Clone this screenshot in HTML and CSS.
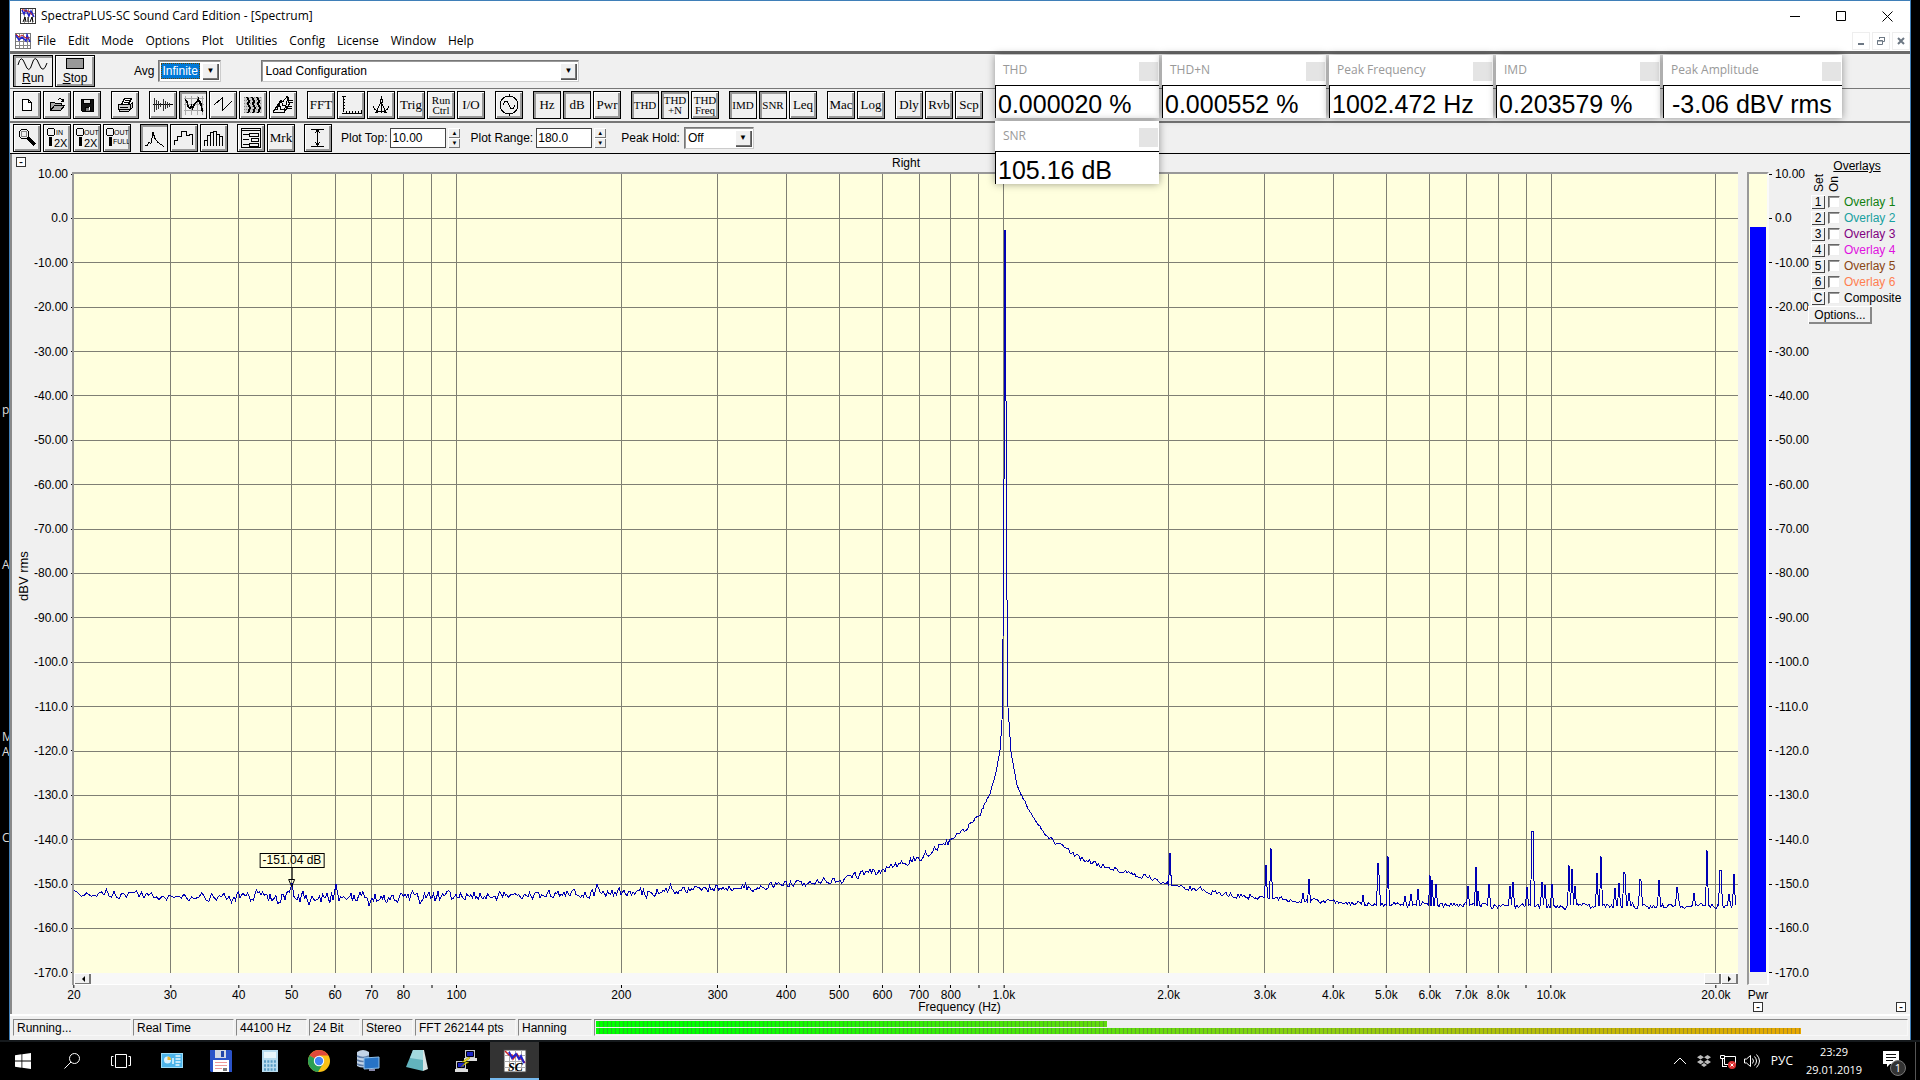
FILE: index.html
```html
<!DOCTYPE html>
<html lang="en">
<head>
<meta charset="utf-8">
<title>SpectraPLUS-SC Sound Card Edition - [Spectrum]</title>
<link rel="stylesheet" href="styles.css">
</head>
<body>
<div class="desktop">
  <span class="desk-label" style="top:402px">p</span>
  <span class="desk-label" style="top:557px">A</span>
  <span class="desk-label" style="top:729px">M</span>
  <span class="desk-label" style="top:744px">A</span>
  <span class="desk-label" style="top:830px">C</span>

  <main class="window">
    <header class="titlebar">
      <svg class="app-icon" viewBox="0 0 16 16"><rect x=".5" y=".5" width="15" height="15" fill="#fff" stroke="#333"/><path d="M4.500 1v14M8.500 1v14M12.500 1v14M1 5.500h14" stroke="#999"/><path d="M2 2l2 4 2-4 3 6 2-5 3 6" fill="none" stroke="#22c" stroke-width="1.500"/><path d="M2 1l3 2 4 0 3 4" fill="none" stroke="#c22"/><path d="M3 14l2-5 1 5M8 9v5M10 14l2-5 1 5" fill="none" stroke="#000"/></svg>
      <h1>SpectraPLUS-SC Sound Card Edition - [Spectrum]</h1>
      <div class="win-buttons">
        <button aria-label="Minimize"><svg viewBox="0 0 11 11"><path d="M0 5.500h10"/></svg></button>
        <button aria-label="Maximize"><svg viewBox="0 0 11 11"><path d="M.5.5h9v9h-9z"/></svg></button>
        <button aria-label="Close"><svg viewBox="0 0 11 11"><path d="M.5.5l10 10M10.500.5l-10 10"/></svg></button>
      </div>
    </header>
    <nav class="menubar">
      <svg class="app-icon" viewBox="0 0 16 16"><rect x=".5" y=".5" width="15" height="15" fill="#fff" stroke="#777"/><path d="M4.500 1v14M8.500 1v14M12.500 1v14M1 4.500h14M1 8.500h14M1 12.500h14" stroke="#888"/><path d="M1 2l3 5 3-3 4 4 1-6 3 7" fill="none" stroke="#22c" stroke-width="1.500"/><path d="M1 1l3 3 3-2 4 3 3 0" fill="none" stroke="#c22"/></svg>
      <button>File</button><button>Edit</button><button>Mode</button><button>Options</button><button>Plot</button><button>Utilities</button><button>Config</button><button>License</button><button>Window</button><button>Help</button>
      <div class="mdi-buttons">
        <button aria-label="Minimize document"><svg viewBox="0 0 10 10"><path d="M2 8h6" stroke-width="2"/></svg></button>
        <button aria-label="Restore document"><svg viewBox="0 0 10 10"><path d="M3.500 3V1.500h5v4H7M3 1.500h6M1.500 4.500h5v4h-5zM1 5h6"/></svg></button>
        <button aria-label="Close document"><svg viewBox="0 0 10 10"><path d="M2 2l6 6M8 2l-6 6" stroke-width="2"/></svg></button>
      </div>
    </nav>

    <div class="bar bar-run">
      <button class="big on"><svg viewBox="0 0 32 14"><path d="M1 8Q4-4 8 7T15 7T22 7T30 6" /></svg><span><u>R</u>un</span></button>
      <button class="big"><svg viewBox="0 0 32 14"><rect x="7.500" y="1.500" width="17" height="10" fill="#999"/></svg><span><u>S</u>top</span></button>
      <label class="avg-label" for="avg">Avg</label>
      <span class="combo combo-avg"><select id="avg"><option>Infinite</option></select></span>
      <span class="combo combo-config"><select aria-label="Configuration"><option>Load Configuration</option></select></span>
    </div>

    <div class="bar bar-tools">
      <div class="group">
        <button class="tool" aria-label="New"><svg viewBox="0 0 24 24"><path d="M7.500 6.500h6l3 3v8h-9zM13.500 6.500v3h3" fill="#fff"/></svg></button>
        <button class="tool" aria-label="Open"><svg viewBox="0 0 24 24"><path d="M5.500 17.500v-8h4l1 1h6v2M5.500 17.500l4-5h10l-4 5z" fill="#aaa"/><path d="M13 6.500q3-2 5 1m.5-2v3h-3"/></svg></button>
        <button class="tool" aria-label="Save"><svg viewBox="0 0 24 24"><path d="M6 6h12v12H7l-1-1z" fill="#111"/><path d="M8.500 6.500h7v4h-7z" fill="#ddd"/><path d="M10 14h5v4h-5z" fill="#777"/><path d="M14.500 14v3" stroke="#fff"/></svg></button>
      </div>
      <div class="group">
        <button class="tool" aria-label="Print"><svg viewBox="0 0 24 24"><path d="M8.500 11.500l3-6h7l-3 6" fill="#fff"/><path d="M12 7.500h5M11 9.500h5"/><path d="M5.500 11.500h12v5h-12zM17.500 11.500l2-2v5l-2 2M6.500 16.500v2h9l3-3" fill="#ccc"/><path d="M7 14.500h8"/></svg></button>
      </div>
      <div class="group">
        <button class="tool" aria-label="Time series"><svg viewBox="0 0 24 24"><path d="M2 11.500h20"/><path d="M3.500 5v14M5.500 7v10M7.500 8v8M9.500 10v4M12.500 6v12M14.500 8v8M16.500 9v6M18.500 10v4" stroke="#333"/></svg></button>
        <button class="tool on" aria-label="Spectrum"><svg viewBox="0 0 24 24"><path d="M4.500 3v19M10.500 3v19M16.500 3v19M21.500 3v19M3 5.500h20M3 11.500h20M3 17.500h20" stroke="#aaa"/><path d="M4 7q2 0 2.500 4t3 4l1-2 1 2 2-4q3-2 4-5l1 4 1-1 2 10" stroke-width="1.500"/></svg></button>
        <button class="tool" aria-label="Phase"><svg viewBox="0 0 24 24"><path d="M3 12l8-7v13l10-10"/></svg></button>
        <button class="tool" aria-label="Spectrogram"><svg viewBox="0 0 24 24"><rect x="3" y="4" width="18" height="16" fill="#ccc" stroke="none"/><path d="M3 4.500h18M3 7.500h18M3 10.500h18M3 13.500h18M3 16.500h18M3 19.500h18" stroke="#888" stroke-dasharray="1 1"/><path d="M6 4l2 4-1 3 2 4-2 5M11 4l2 4-1 3 2 4-2 5M16 4l2 4-1 3 2 4-2 5" stroke-width="2"/></svg></button>
        <button class="tool" aria-label="3-D surface"><svg viewBox="0 0 24 24"><path d="M2 19.500h11l3-4h5M3 16.500h3l2-6 2 6h3l2-3h6M5 13.500h2l3-6 2 5h3l2-8 1 5h4M8 8.500h4l4-5 2 4h4M2 19l6-9M13 19l6-9"/></svg></button>
      </div>
      <div class="group">
        <button class="tool">FFT</button>
        <button class="tool" aria-label="Scaling"><svg viewBox="0 0 24 24"><path d="M4.500 3v16M3 3.500h4M4 6.500h2M4 9.500h2M4 12.500h2M4 15.500h2M3 20.500h19v-4M7.500 18v3M10.500 18v3M13.500 18v3M16.500 18v3M19.500 18v3"/></svg></button>
        <button class="tool" aria-label="Calibration"><svg viewBox="0 0 24 24"><path d="M12 3v4M11 6h2v3h-2zM12 9L7 19.500l3-1M12 9l5 10.500-3-1M12 9v11M4 13q1 4 5 5h6q4-1 5-5"/></svg></button>
        <button class="tool">Trig</button>
        <button class="tool two">Run<br>Ctrl</button>
        <button class="tool">I/O</button>
      </div>
      <div class="group">
        <button class="tool" aria-label="Signal generator"><svg viewBox="0 0 24 24"><circle cx="12" cy="12" r="9"/><path d="M12 1v2M12 21v2M6 12q3-8 6 0t6 0"/></svg></button>
      </div>
      <div class="group">
        <button class="tool on">Hz</button><button class="tool on">dB</button><button class="tool">Pwr</button>
      </div>
      <div class="group">
        <button class="tool caps on">THD</button><button class="tool two on">THD<br>+N</button><button class="tool two">THD<br>Freq</button>
      </div>
      <div class="group">
        <button class="tool caps on">IMD</button><button class="tool caps on">SNR</button><button class="tool">Leq</button>
      </div>
      <div class="group">
        <button class="tool">Mac</button><button class="tool">Log</button>
      </div>
      <div class="group">
        <button class="tool">Dly</button><button class="tool">Rvb</button><button class="tool">Scp</button>
      </div>
    </div>

    <div class="bar bar-plot">
      <div class="group">
        <button class="tool" aria-label="Zoom"><svg viewBox="0 0 24 24"><circle cx="9" cy="8" r="5"/><circle cx="9" cy="8" r="3" stroke="#888"/><path d="M13 12l7 7" stroke-width="3"/></svg></button>
        <button class="tool" aria-label="Zoom in 2X"><svg viewBox="0 0 24 24"><circle cx="6" cy="6" r="4"/><path d="M5.500 11v9" stroke-width="3"/><text x="11" y="9">IN</text><text x="9" y="21" class="t2">2X</text></svg></button>
        <button class="tool" aria-label="Zoom out 2X"><svg viewBox="0 0 24 24"><circle cx="5" cy="6" r="4"/><path d="M5.500 11v9" stroke-width="3"/><text x="9" y="9">OUT</text><text x="9" y="21" class="t2">2X</text></svg></button>
        <button class="tool" aria-label="Zoom out full"><svg viewBox="0 0 24 24"><circle cx="5" cy="6" r="4"/><path d="M5.500 11v9" stroke-width="3"/><text x="9" y="9">OUT</text><text x="8" y="18">FULL</text></svg></button>
      </div>
      <div class="group">
        <button class="tool on" aria-label="Line plot"><svg viewBox="0 0 24 24"><path d="M3 19.500h2l2-3 2 1 2-11 2 6 3 4 6 4"/></svg></button>
        <button class="tool" aria-label="Step plot"><svg viewBox="0 0 24 24"><path d="M2.500 19v-5h3v-4h4v-5h5v4h3v-1h3v11"/></svg></button>
        <button class="tool" aria-label="Bar plot"><svg viewBox="0 0 24 24"><path d="M2.500 20v-6h3v6M5.500 20V9.500h3V20M8.500 20V6.500h3V20M11.500 20V5.500h3V20M14.500 20V8.500h3V20M17.500 20v-9.500h3V20"/></svg></button>
      </div>
      <div class="group">
        <button class="tool" aria-label="Plot options"><svg viewBox="0 0 24 24"><path d="M2.500 2.500h19v19h-19zM3 4.500h18"/><path d="M4 8.500h6M10.500 7.500h9v3h-9zM4 13.500h6M12.500 12.500h7v3h-7zM4 18.500h6M10.500 17.500h9v3h-9z"/></svg></button>
        <button class="tool">Mrk</button>
      </div>
      <div class="group">
        <button class="tool" aria-label="Autoscale"><svg viewBox="0 0 24 24"><path d="M5 3.500h13M5 20.500h13M11.500 4v15M9 7l2.500-3L14 7M9 16l2.500 3 2.500-3"/></svg></button>
      </div>
      <label for="ptop">Plot Top:</label>
      <input id="ptop" class="num" value="10.00">
      <span class="spin"><button aria-label="Plot top up"></button><button class="down" aria-label="Plot top down"></button></span>
      <label class="range-label" for="prange">Plot Range:</label>
      <input id="prange" class="num" value="180.0">
      <span class="spin"><button aria-label="Plot range up"></button><button class="down" aria-label="Plot range down"></button></span>
      <label class="hold-label" for="hold">Peak Hold:</label>
      <span class="combo combo-hold"><select id="hold"><option>Off</option></select></span>
    </div>

    <section class="chart">
      <div class="head-left"><button class="collapse">-</button></div>
      <div class="head-title">Right</div>
      <div class="yaxis">
        <span class="ytitle">dBV rms</span>
        <div class="scale" id="scale-left"></div>
      </div>
      <div class="plot">
        <svg id="plot" viewBox="0 0 1664 800" preserveAspectRatio="none"></svg>
        <div class="marker"><span>-151.04 dB</span><i></i><svg viewBox="0 0 8 8"><path d="M1 .5h6L4 7.500z"/></svg></div>
      </div>
      <div class="scroll"><button aria-label="Scroll left"><svg viewBox="0 0 6 8"><path d="M5 1v6L2 4z"/></svg></button><button class="thumb" aria-label="Scroll thumb"></button><button aria-label="Scroll right"><svg viewBox="0 0 6 8"><path d="M1 1v6l3-3z"/></svg></button></div>
      <div class="xaxis" id="xaxis"></div>
      <div class="xtitle">Frequency (Hz)</div>
      <div class="power"><div class="power-fill"></div></div>
      <div class="power-foot"></div>
      <div class="power-name">Pwr</div>
      <div class="power-box"><button class="collapse">-</button></div>
      <div class="pscale"><div class="scale right" id="scale-right"></div></div>
      <aside class="overlays">
        <h2>Overlays</h2>
        <div class="ov-head"><span>Set</span><span>On</span></div>
        <div class="ov"><button>1</button><input type="checkbox" id="o1"><label for="o1" class="c1">Overlay 1</label></div>
        <div class="ov"><button>2</button><input type="checkbox" id="o2"><label for="o2" class="c2">Overlay 2</label></div>
        <div class="ov"><button>3</button><input type="checkbox" id="o3"><label for="o3" class="c3">Overlay 3</label></div>
        <div class="ov"><button>4</button><input type="checkbox" id="o4"><label for="o4" class="c4">Overlay 4</label></div>
        <div class="ov"><button>5</button><input type="checkbox" id="o5"><label for="o5" class="c5">Overlay 5</label></div>
        <div class="ov"><button>6</button><input type="checkbox" id="o6"><label for="o6" class="c6">Overlay 6</label></div>
        <div class="ov"><button>C</button><input type="checkbox" id="o7"><label for="o7">Composite</label></div>
        <button class="ov-options">Options...</button>
        <button class="collapse last">-</button>
      </aside>
    </section>

    <footer class="status">
      <span class="w118">Running...</span><span class="w101">Real Time</span><span class="w71">44100 Hz</span><span class="w51">24 Bit</span><span class="w51">Stereo</span><span class="w101">FFT 262144 pts</span><span class="w74">Hanning</span>
      <div class="meter"><div class="lvl top" style="width:39%"></div><div class="lvl" style="width:92%"></div></div>
    </footer>
  </main>

  <div class="readouts">
    <div class="readout"><header>THD<i></i></header><p>0.000020 %</p></div>
    <div class="readout"><header>THD+N<i></i></header><p>0.000552 %</p></div>
    <div class="readout"><header>Peak Frequency<i></i></header><p>1002.472 Hz</p></div>
    <div class="readout"><header>IMD<i></i></header><p>0.203579 %</p></div>
    <div class="readout wide"><header>Peak Amplitude<i></i></header><p>-3.06 dBV rms</p></div>
    <div class="readout"><header>SNR<i></i></header><p>105.16 dB</p></div>
  </div>
</div>

<footer class="taskbar">
  <button class="sys" aria-label="Start"><svg viewBox="0 0 16 16"><path fill="#fff" d="M0 2.300L6.500 1.300v6.300H0zM7.300 1.200L16 0v7.600H7.300zM0 8.400h6.500v6.300L0 13.700zM7.300 8.400H16V16l-8.700-1.200z"/></svg></button>
  <button class="sys" aria-label="Search"><svg viewBox="0 0 16 16" class="line"><circle cx="10.500" cy="5.500" r="5"/><path d="M7 9l-6.500 6.500"/></svg></button>
  <button class="sys" aria-label="Task view"><svg viewBox="0 0 20 16" class="line tv"><path d="M4.500 1.500h11v13h-11zM2.500 3.500h-2v9h2M17.500 3.500h2v9h-2"/></svg></button>
  <button aria-label="Control panel"><svg viewBox="0 0 24 24"><rect x="1.500" y="4.500" width="21" height="14" fill="#4db4ea" stroke="#9cdcf8"/><circle cx="7.500" cy="11" r="3.500" fill="#d8f2ff"/><path d="M7.500 11V7.500a3.500 3.500 0 0 1 3.500 3.500z" fill="#e9b52c"/><path d="M13 15V9M15.500 7h5M15.500 10h5M15.500 13h5M15.500 16h4" stroke="#e8f8ff" stroke-width="1.500"/></svg></button>
  <button aria-label="Total Commander"><svg viewBox="0 0 24 24"><path d="M1 1h21l1 1v21H2l-1-1z" fill="#2a52c8"/><rect x="6" y="1" width="11" height="8" fill="#d4d8e4"/><rect x="12" y="2" width="3" height="6" fill="#2446a8"/><rect x="4" y="11" width="16" height="12" fill="#fff"/><path d="M6 13.500h12M6 16.500h12M6 19.500h7" stroke="#e99"/><path d="M14 19h4v3h-4z" fill="#777"/></svg></button>
  <button aria-label="Calculator"><svg viewBox="0 0 24 24"><rect x="4" y="1" width="16" height="22" fill="#b9dcef"/><rect x="6" y="3" width="12" height="6" fill="#e9f6fb"/><path d="M6 12.500h12M6 16.500h12M6 20.500h12" stroke="#5b9cc4" stroke-width="2.500" stroke-dasharray="2 1.300"/></svg></button>
  <button aria-label="Chrome"><svg viewBox="0 0 24 24"><circle cx="12" cy="12" r="11" fill="#fbc116"/><path d="M12 12L2.500 6.500A11 11 0 0 1 21.500 6.500H12z" fill="#df4a3a"/><path d="M2.500 6.500A11 11 0 0 0 11 23l5.500-9L12 12z" fill="#2c9f54"/><circle cx="12" cy="12" r="5.200" fill="#fff"/><circle cx="12" cy="12" r="4.200" fill="#4285f4"/></svg></button>
  <button aria-label="Server"><svg viewBox="0 0 24 24"><path d="M1 3q6-4 12 0v14q-6 3-12 0z" fill="#c2d3e6"/><path d="M1 7q6 3 12 0M1 11q6 3 12 0M1 15q6 3 12 0" fill="none" stroke="#5f7da6" stroke-width="1.500"/><path d="M8 9l15-1v11l-15 1z" fill="#2773c6" stroke="#8ec0ec"/><path d="M13 20h6v2h-6z" fill="#88a"/></svg></button>
  <button aria-label="Notepad"><svg viewBox="0 0 24 24"><path d="M17 1l2 0 4 19-5 2z" fill="#d8e4e4"/><path d="M8 1h10l0 21L1 18z" fill="#62b3bd"/><path d="M8 1h10v10L5 9z" fill="#a2d9de"/></svg></button>
  <button aria-label="PuTTY"><svg viewBox="0 0 24 24"><path d="M11 1h10v8H11zM2 12h10v8H2z" fill="#ccc"/><path d="M12.500 2.500h7v5h-7zM3.500 13.500h7v5h-7z" fill="#1922c2" stroke="#001"/><path d="M10 9h13v3H10zM1 20h13v3H1z" fill="#ddd"/><path d="M15 8l-7 5h4l-5 5 8-5h-4l5-4z" fill="#fe2" stroke="#770" stroke-width=".5"/></svg></button>
  <button class="active" aria-label="SpectraPLUS-SC"><svg viewBox="0 0 24 24"><rect x="1" y="1" width="22" height="22" fill="#fff" stroke="#444"/><path d="M6.500 1v22M12.500 1v22M18.500 1v22M1 6.500h22M1 12.500h22M1 18.500h22" stroke="#aaa"/><path d="M2 2l4 4h3l1 4 4-5 3 5 2 0 3 4" fill="none" stroke="#c22" stroke-width="1.500"/><path d="M6 3l3 6 4-4 3 5 2-3 3 7" fill="none" stroke="#22c" stroke-width="2"/><text x="5" y="22" class="sc">SC</text></svg></button>
  <div class="tray">
    <svg viewBox="0 0 16 16" class="line"><path d="M2 11l6-6 6 6"/></svg>
    <svg viewBox="0 0 16 16" fill="#bbb"><path d="M4.500 2L8 4.200 4.500 6.400 1 4.200zM11.500 2L15 4.200l-3.500 2.200L8 4.200zM4.500 6.800L8 9l-3.500 2.200L1 9zM11.500 6.800L15 9l-3.500 2.200L8 9zM8 10l3 2-3 2-3-2z"/></svg>
    <svg viewBox="0 0 16 16" class="line"><path d="M4.500 3.500h11v8h-11zM.5 2.500h4v3h-4zM2.500 6v8M2 13.500h5"/><circle cx="12" cy="12" r="4" fill="#d33" stroke="none"/><path d="M10.500 10.500l3 3M13.500 10.500l-3 3"/></svg>
    <svg viewBox="0 0 16 16" class="line"><path d="M.5 6v4h2l4 3.500v-11L2.500 6zM8.500 5.500q2 2.500 0 5M10.500 3.500q4 4.500 0 9M12.500 1.500q6 6.500 0 13"/></svg>
    <span class="lang">РУС</span>
    <div class="clock"><span>23:29</span><span>29.01.2019</span></div>
    <div class="notes"><svg viewBox="0 0 16 16"><path d="M0 0h16v13H7l-3 3v-3H0z" fill="#fff"/><path d="M3 3.500h10M3 6.500h10M3 9.500h7" stroke="#111"/></svg><b>1</b></div>
    <i class="peek"></i>
  </div>
</footer>
<script src="plot.js"></script>
</body>
</html>
```
FILE: styles.css
```css
* { box-sizing: border-box; }
html, body { height: 100%; margin: 0; }
body {
  display: flex; flex-direction: column; overflow: hidden;
  background: #000; color: #000;
  font: 12px/14px "Liberation Sans", Arial, sans-serif;
}
button { font: inherit; color: inherit; padding: 0; margin: 0; border: 0; background: none; }
h1, h2, p { margin: 0; font-weight: normal; }

.desktop { position: relative; flex: 1; min-height: 0; display: flex; padding: 0 9px; }
.desk-label { position: absolute; left: 2px; color: #ddd; font: 12px/16px "Open Sans", sans-serif; }
.window {
  position: relative; flex: 1; min-width: 0; display: flex; flex-direction: column;
  background: #f0f0f0; border: 1px solid #3f7fb8; border-bottom: 0;
}

.titlebar { display: flex; align-items: center; height: 30px; padding-left: 10px; background: #fff; }
.titlebar h1 { flex: 1; padding-left: 5px; font: 12px/16px "Open Sans", sans-serif; }
.app-icon { width: 16px; height: 16px; flex: none; }
.win-buttons { display: flex; }
.win-buttons button { width: 46px; height: 30px; display: grid; place-items: center; }
.win-buttons svg { width: 11px; height: 11px; fill: none; stroke: #000; }

.menubar { display: flex; align-items: center; height: 20px; padding-left: 5px; background: #fff; font: 12px/16px "Open Sans", sans-serif; }
.menubar > button { padding: 0 6px; }
.mdi-buttons { margin-left: auto; display: flex; gap: 2px; }
.mdi-buttons button { width: 18px; height: 18px; border: 1px solid #eee; display: grid; place-items: center; }
.mdi-buttons svg { width: 10px; height: 10px; fill: none; stroke: #6d7884; }

.bar { display: flex; align-items: center; padding-left: 3px; }
.bar-run { height: 38px; border-top: 3px solid #6a6a6a; border-bottom: 1px solid #777; }
.bar-tools { height: 34px; border-bottom: 2px solid #777; }
.bar-plot { height: 31px; border-bottom: 1px solid #000; }
.group { display: flex; gap: 2px; margin-right: 10px; }
.bar-plot .group { margin-right: 9px; }

.tool, .big {
  border: 1px solid #000; background: #f0f0f0;
  box-shadow: inset 1px 1px #fff, inset -2px -2px #999;
}
.tool.on, .big.on { box-shadow: inset 2px 2px #999; }
.tool { width: 28px; height: 28px; display: grid; place-items: center; overflow: hidden; font: 13px/14px "Liberation Serif", serif; white-space: nowrap; }
.tool.caps { font-size: 11px; }
.tool.two { font-size: 11px; line-height: 10px; }
.tool svg { width: 24px; height: 24px; fill: none; stroke: #000; shape-rendering: crispEdges; }
.tool text { font: 7px "Liberation Sans", sans-serif; fill: #000; stroke: none; }
.tool text.t2 { font-size: 11px; }
.big { width: 40px; height: 32px; margin-right: 2px; display: flex; flex-direction: column; align-items: center; justify-content: center; font-size: 12px; line-height: 14px; }
.big svg { width: 32px; height: 14px; fill: none; stroke: #000; }

.combo { display: flex; align-items: stretch; height: 22px; padding: 2px; background: #fff; border: 1px solid; border-color: #777 #ccc #ccc #777; box-shadow: inset 1px 1px #999; }
.combo select { flex: 1; min-width: 0; appearance: none; border: 0; outline: 0; margin: 0; padding: 0 1px; background: #fff; color: #000; font: inherit; }
.combo::after {
  content: "▼"; width: 16px; background: #f0f0f0; font-size: 8px; line-height: 16px; text-align: center;
  box-shadow: inset 1px 1px #fff, inset -1px -1px #777, 1px 1px #555;
}
.avg-label { margin-left: 37px; margin-right: 4px; }
.combo-avg { width: 63px; }
.combo-avg select { background: #0078d7; color: #fff; outline: 1px dotted #640; outline-offset: -1px; margin-right: 2px; }
.combo-config { width: 318px; margin-left: 40px; }
.combo-hold { width: 70px; margin-left: 4px; }
.num { width: 56px; height: 20px; margin-left: 3px; padding: 0 1px; border: 1px solid #444; background: #fff; font: inherit; }
.spin { display: flex; flex-direction: column; width: 12px; margin-left: 2px; }
.spin button { height: 10px; font-size: 6px; line-height: 8px; box-shadow: inset 1px 1px #fff, inset -1px -1px #777; }
.spin button::before { content: "▲"; }
.spin .down::before { content: "▼"; }
.range-label { margin-left: 10px; }
.hold-label { margin-left: 15px; }

.chart {
  flex: 1; min-height: 0; display: grid; padding-left: 2px;
  box-shadow: inset 2px 0 #8a8a8a;
  grid-template-columns: 62px 1fr 9px 22px 39px 102px;
  grid-template-rows: 18px 1fr 12px 16px 13px;
}
.head-left { padding: 3px 0 0 4px; }
.head-title { grid-column: 2; text-align: center; line-height: 18px; }
.collapse { width: 10px; height: 10px; border: 1px solid #333; background: #fff; display: grid; place-items: center; line-height: 7px; }
.yaxis { grid-row: 2; grid-column: 1; display: flex; justify-content: space-between; align-items: stretch; padding-top: 2px; }
.ytitle { writing-mode: vertical-rl; transform: rotate(180deg); margin-left: 5px; padding-bottom: 6px; text-align: center; font-size: 13px; }
.scale { display: flex; flex-direction: column; justify-content: space-between; margin: -7px 0; }
.scale span { display: flex; align-items: center; justify-content: flex-end; gap: 3px; height: 14px; }
.scale span::after { content: ""; width: 3px; height: 1px; background: #000; }
.scale.right span { flex-direction: row-reverse; }
.plot { position: relative; grid-row: 2; grid-column: 2; border-top: 2px solid #999; box-shadow: -2px 0 #999; background: #ffffde; }
.plot > svg { position: absolute; inset: 0; width: 100%; height: 100%; }
.plot path, .plot polyline { vector-effect: non-scaling-stroke; fill: none; }
.grid { stroke: #7f7f74; shape-rendering: crispEdges; }
.trace { stroke: #0000b4; stroke-width: 1; shape-rendering: crispEdges; }
.marker { position: absolute; left: 13.100%; top: 85%; transform: translateX(-50%); display: flex; flex-direction: column; align-items: center; }
.marker span { border: 1px solid #000; line-height: 13px; padding: 0 2px; white-space: nowrap; }
.marker i { width: 1px; height: 11px; background: #000; }
.marker svg { width: 8px; height: 8px; fill: none; stroke: #000; }
.scroll { grid-row: 3; grid-column: 2; display: flex; background: #f8f8f8; border-bottom: 1px solid #fff; box-shadow: -2px 0 #999; }
.scroll button { width: 17px; height: 11px; display: grid; place-items: center; background: #f0f0f0; box-shadow: inset 1px 1px #fff, inset -2px -1px #777; }
.scroll svg { width: 6px; height: 8px; }
.scroll .thumb { margin-left: auto; }
.xaxis { grid-row: 4; grid-column: 2; position: relative; }
.xaxis span { position: absolute; top: 0; transform: translateX(-50%); display: flex; flex-direction: column; align-items: center; line-height: 14px; }
.xaxis span::before { content: ""; width: 1px; height: 3px; background: #000; }
.xtitle { grid-row: 5; grid-column: 1 / 4; text-align: center; line-height: 12px; padding-left: 160px; }
.power { grid-row: 2; grid-column: 4; background: #ffffde; border: 2px solid #999; border-right-color: #fafafa; border-bottom: 0; padding: 0 1px; display: flex; align-items: flex-end; }
.power-fill { flex: 1; height: 93.400%; background: #00f; border-bottom: 1px solid #f0f0f0; }
.power-foot { grid-row: 3; grid-column: 4; border-left: 2px solid #999; border-right: 2px solid #fff; border-bottom: 1px solid #fff; }
.power-name { grid-row: 4; grid-column: 4; text-align: center; line-height: 20px; }
.power-box { grid-row: 5; grid-column: 4; display: flex; justify-content: center; padding-top: 1px; }
.pscale { grid-row: 2; grid-column: 5; display: flex; padding-top: 2px; }
.overlays { grid-row: 1 / 6; grid-column: 6; display: flex; flex-direction: column; align-items: flex-start; padding: 5px 4px 2px 0; }
.overlays h2 { align-self: center; font-size: 12px; line-height: 14px; text-decoration: underline; }
.ov-head { display: flex; gap: 1px; padding-left: 4px; height: 21px; align-items: flex-end; padding-bottom: 2px; }
.ov-head span { writing-mode: vertical-rl; transform: rotate(180deg); width: 14px; line-height: 14px; }
.ov { display: flex; align-items: center; height: 16px; padding-left: 3px; }
.ov button { width: 14px; height: 14px; line-height: 13px; box-shadow: inset 1px 1px #fff, inset -1px -1px #444; }
.ov input { appearance: none; width: 12px; height: 12px; margin: 0 4px 0 3px; background: #fff; border: 1px solid; border-color: #666 #eee #eee #666; box-shadow: inset 1px 1px #999; }
.c1 { color: #108010; } .c2 { color: #18a0a0; } .c3 { color: #800080; }
.c4 { color: #e010e0; } .c5 { color: #8a4513; } .c6 { color: #ff7f50; }
.ov-options { width: 64px; height: 18px; box-shadow: inset 1px 1px #fff, inset -2px -2px #888; }
.last { margin-top: auto; align-self: flex-end; }

.status { display: flex; gap: 2px; height: 26px; padding: 3px 2px 4px 3px; border-top: 2px solid #fff; }
.status > * { border: 1px solid; border-color: #888 #f8f8f8 #f8f8f8 #888; }
.status span { padding-left: 3px; line-height: 16px; white-space: nowrap; }
.w118 { width: 118px; } .w101 { width: 101px; } .w71 { width: 71px; }
.w51 { width: 51px; } .w74 { width: 74px; }
.meter { flex: 1; display: flex; flex-direction: column; gap: 1px; padding: 1px; }
.lvl { height: 6px; background: repeating-linear-gradient(90deg, transparent 0 3px, #5556 3px 4px), linear-gradient(90deg, #0f0 10%, #7fd410 55%, #e8a800); }
.lvl.top { background: repeating-linear-gradient(90deg, transparent 0 3px, #5556 3px 4px), linear-gradient(90deg, #0f0 22%, #62da0c); }

.readouts { position: absolute; left: 995px; top: 55px; display: flex; flex-wrap: wrap; gap: 3px; width: 850px; }
.readout { width: 164px; height: 63px; background: #fff; box-shadow: 0 0 8px #0006; }
.readout.wide { width: 179px; }
.readout header { display: flex; justify-content: space-between; align-items: center; height: 30px; padding: 0 1px 0 8px; color: #999; font: 12px/16px "Open Sans", sans-serif; }
.readout header i { width: 19px; height: 19px; margin-top: 3px; background: #e4e4e4; }
.readout p { height: 33px; border-top: 1px solid #000; border-left: 1px solid #000; padding-left: 2px; font-size: 25px; line-height: 36px; white-space: nowrap; }
.readout.wide p { padding-left: 8px; }

.taskbar { display: flex; height: 40px; background: #000; color: #fff; border-top: 2px solid #15191c; font: 12px/16px "Open Sans", sans-serif; }
.taskbar > button { width: 49px; display: grid; place-items: center; }
.taskbar > .sys { padding-right: 3px; }
.taskbar > button svg { width: 24px; height: 24px; }
.taskbar > .sys svg { width: 16px; height: 16px; }
.taskbar > .sys .tv { width: 20px; }
.taskbar .active { background: #333; box-shadow: inset 0 -2px #76b9ed; }
.line { fill: none; stroke: #fff; }
.sc { font: italic bold 12px "Liberation Serif", serif; }
.tray { margin-left: auto; display: flex; align-items: center; gap: 8px; }
.tray > svg { width: 16px; height: 16px; }
.lang { padding: 0 4px 0 3px; }
.clock { display: flex; flex-direction: column; align-items: center; width: 58px; font-size: 11px; line-height: 18px; }
.notes { position: relative; margin-left: 12px; width: 24px; height: 20px; }
.notes svg { width: 16px; height: 16px; }
.notes b { position: absolute; left: 7px; top: 9px; width: 16px; height: 16px; border: 1px solid #777; border-radius: 8px; background: #333; font: 11px/14px "Open Sans", sans-serif; text-align: center; }
.peek { width: 1px; height: 38px; margin-right: 4px; background: #555; }
```
FILE: plot.js
```js
const NS = "http://www.w3.org/2000/svg";
const W = 1664, H = 800, DECADE = 547.3;
const fx = f => DECADE * Math.log10(f / 20);
const plot = document.getElementById("plot");

function add(tag, attrs) {
  const el = document.createElementNS(NS, tag);
  for (const k in attrs) el.setAttribute(k, attrs[k]);
  plot.appendChild(el);
}

// grid
let d = "";
for (let i = 1; i < 18; i++) d += `M0 ${i * H / 18}H${W}`;
const names = {20: "20", 30: "30", 40: "40", 50: "50", 60: "60", 70: "70", 80: "80", 100: "100",
  200: "200", 300: "300", 400: "400", 500: "500", 600: "600", 700: "700", 800: "800", 1000: "1.0k",
  2000: "2.0k", 3000: "3.0k", 4000: "4.0k", 5000: "5.0k", 6000: "6.0k", 7000: "7.0k", 8000: "8.0k",
  10000: "10.0k", 20000: "20.0k"};
const xaxis = document.getElementById("xaxis");
for (const dec of [10, 100, 1000, 10000]) {
  for (let m = 1; m < 10; m++) {
    const f = dec * m;
    if (f < 20 || f > 20000) continue;
    const x = fx(f);
    if (f > 20) d += `M${x} 0V${H}`;
    const s = document.createElement("span");
    s.style.left = (100 * x / W) + "%";
    s.textContent = names[f] || "";
    xaxis.appendChild(s);
  }
}
add("path", {d, class: "grid"});

// vertical scales
for (const id of ["scale-left", "scale-right"]) {
  const box = document.getElementById(id);
  for (let v = 10; v >= -170; v -= 10) {
    const s = document.createElement("span");
    s.textContent = v === 0 ? "0.0" : v <= -100 ? v.toFixed(1) : v.toFixed(2);
    box.appendChild(s);
  }
}

// trace: noise floor envelope [x, y, noise], then spikes [x, y]
const base = [[0,721,5],[60,722,5],[120,724,6],[200,724,7],[290,724,7],[380,723,5],[500,721,5],[600,718,4],
  [680,714,4],[726,710,4],[766,706,4],[808,697,4],[845,685,4],[876,668,4],[892,655,3],[904,644,2],[910,632,1],
  [916,621,1],[922,599,0],[926,577,0],[928,548,0],[929,467,0],[930,250,0],[931,57,0],[932,57,0],[932,227,0],
  [933,427,0],[934,534,0],[937,579,0],[943,612,0],[947,621,1],[956,639,1],[966,654,2],[976,666,3],[1006,685,3],
  [1045,698,3],[1076,705,3],[1094,711,3],[1143,720,3],[1186,725,3],[1256,728,3],[1306,731,3],[1376,732,3],[1446,733,3],[1661,733,3]];
const spikes = [[218,710],[235,732],[262,711],[523,711],[1096,680],[1192,692],[1197,675],[1229,720],[1235,706],
  [1289,722],[1304,690],[1305,702],[1314,683],[1331,723],[1337,721],[1344,716],[1356,702],[1358,707],[1362,711],
  [1394,713],[1402,694],[1404,718],[1415,711],[1436,713],[1439,709],[1453,714],[1458,658],[1459,658],[1468,709],
  [1471,712],[1478,711],[1495,692],[1498,696],[1501,713],[1523,700],[1527,683],[1541,715],[1545,710],[1550,699],
  [1551,701],[1555,720],[1566,706],[1567,708],[1585,707],[1603,714],[1604,720],[1620,720],[1633,677],[1646,697],
  [1647,697],[1655,721],[1660,701]];
let seed = 20190129;
const rnd = () => (seed = (seed * 1103515245 + 12345) % 2147483648) / 2147483648;
const pts = [];
let walk = 0, seg = 0;
for (let x = 0; x <= 1661;) {
  while (seg < base.length - 2 && base[seg + 1][0] <= x) seg++;
  const [x0, y0, n] = base[seg], [x1, y1] = base[seg + 1];
  const mid = x1 === x0 ? y1 : y0 + (y1 - y0) * (x - x0) / (x1 - x0);
  walk = walk * 0.25 + (rnd() - 0.5) * 1.6;
  pts.push([x, mid + walk * n * (rnd() < 0.08 ? 1.5 : 1)]);
  x += x < 160 ? 2.5 : x < 900 ? 1.5 : x < 960 ? 1 : 1.5;
}
const curve = pts.filter(p => !(p[0] > 928 && p[0] < 935) && !spikes.some(s => Math.abs(s[0] - p[0]) < 2));
curve.push([929, 467], [930.5, 227], [931, 57], [931.8, 57], [932, 227], [933, 427], [934, 534]);
for (const [x, y] of spikes) {
  curve.push([x, y]);
  if (x > 1000) {
    const foot = 732 - Math.max(0, 1256 - x) * 0.12;
    if (!spikes.some(s => s[0] === x - 1)) curve.push([x - 1.5, foot]);
    if (!spikes.some(s => s[0] === x + 1)) curve.push([x + 1.5, foot]);
  }
}
curve.sort((a, b) => a[0] - b[0]);
add("polyline", {points: curve.map(p => p[0] + "," + p[1].toFixed(1)).join(" "), class: "trace"});
```
